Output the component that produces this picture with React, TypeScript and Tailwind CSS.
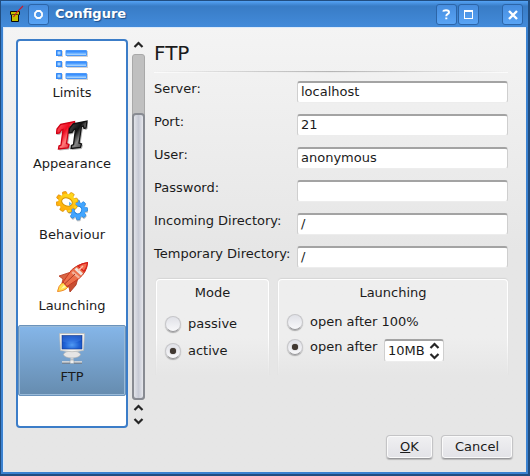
import React from "react";

function LimitsIcon() {
  return (
    <svg width="32" height="32" viewBox="0 0 32 32">
      <defs>
        <linearGradient id="bar" x1="0" y1="0" x2="0" y2="1">
          <stop offset="0" stopColor="#2f86fb" />
          <stop offset="0.35" stopColor="#4c9dff" />
          <stop offset="1" stopColor="#b4dcff" />
        </linearGradient>
      </defs>
      {[1, 12, 24].map((y) => (
        <g key={y}>
          <rect x="2" y={y + 1} width="5" height="6" fill="#d2d2d2" />
          <rect x="11" y={y + 1} width="21" height="6" fill="#d2d2d2" />
          <rect x="0" y={y} width="6" height="6" rx="0.5" fill="#338af8" />
          <rect x="1.5" y={y + 1.5} width="3" height="3" fill="#a4d1ff" />
          <rect x="9.5" y={y} width="21.5" height="6" rx="1" fill="#4b98f8" />
          <rect x="10.5" y={y + 1} width="19.5" height="4" fill="url(#bar)" />
        </g>
      ))}
    </svg>
  );
}

function AppearanceIcon() {
  const t = "M4.5 3.5 L18.5 0.5 L17.5 7.5 L15.5 8 L15 5.5 L13 6 L10.5 22.5 L13 23.5 L12 27 L2.500 28 L3 25 L5 24 L7 8.500 L5.500 9 L3.500 12 L0.500 12.500 L1 8 Z";
  return (
    <svg width="32" height="32" viewBox="0 0 32 32">
      <defs>
        <linearGradient id="red" x1="0" y1="0" x2="1" y2="1">
          <stop offset="0" stopColor="#ff6a70" />
          <stop offset="0.4" stopColor="#f00a20" />
          <stop offset="0.6" stopColor="#ff7a7a" />
          <stop offset="1" stopColor="#c90015" />
        </linearGradient>
        <linearGradient id="blk" x1="0" y1="0" x2="1" y2="1">
          <stop offset="0" stopColor="#555" />
          <stop offset="0.4" stopColor="#111" />
          <stop offset="0.6" stopColor="#888" />
          <stop offset="1" stopColor="#181818" />
        </linearGradient>
      </defs>
      <path d={t} transform="translate(1 2)" fill="#b8b8b8" stroke="#b8b8b8" />
      <path d={t} transform="translate(0 1)" fill="url(#red)" stroke="#cf0014" strokeWidth="1.3" />
      <path d={t} transform="translate(13.500 1.500)" fill="#b8b8b8" stroke="#b8b8b8" />
      <path d={t} transform="translate(12.500 0.500)" fill="url(#blk)" stroke="#111" strokeWidth="1.300" />
    </svg>
  );
}

function Gear({ fill, stroke }: { fill: string; stroke: string }) {
  return (
    <g fill={fill} stroke={stroke} strokeWidth="0.7">
      {[0, 45, 90, 135].map((a) => (
        <rect key={a} x="-2.1" y="-11" width="4.2" height="22" rx="1" transform={`rotate(${a + 12})`} />
      ))}
      <circle r="8.6" strokeWidth="0" />
    </g>
  );
}

function BehaviourIcon() {
  return (
    <svg width="32" height="32" viewBox="0 0 32 32">
      <defs>
        <linearGradient id="gold" x1="0" y1="0" x2="0" y2="1">
          <stop offset="0" stopColor="#ffd91c" />
          <stop offset="1" stopColor="#ffad0b" />
        </linearGradient>
      </defs>
      <g transform="translate(22 19) rotate(30) scale(.87 .9)">
        <g transform="translate(1 1)"><Gear fill="#c4c4c4" stroke="#c4c4c4" /></g>
        <Gear fill="#42a5ff" stroke="#187bd5" />
        <circle r="4.2" fill="#fff" stroke="#187bd5" />
      </g>
      <g transform="translate(11 11) rotate(20) scale(1.020 .94)">
        <Gear fill="url(#gold)" stroke="#d98a00" />
        <ellipse rx="5.400" ry="4.200" fill="#fff" stroke="#d49300" />
        <path d="M2 -1 L5 0 L3 3Z" fill="#58b4ef" />
      </g>
    </svg>
  );
}

function LaunchingIcon() {
  return (
    <svg width="32" height="32" viewBox="0 0 32 32">
      <path d="M1.500 29.500 Q2 24 7 20 L12 25 Q9 29 1.500 29.500Z" fill="#ffdf4d" stroke="#f18a2a" />
      <path d="M5 27 L8 23 L10 25Z" fill="#fff6b0" />
      <path d="M15 10 L3 14 L7 17 L6 21 L14 19Z" fill="#d96542" stroke="#b7391f" strokeWidth=".8" />
      <path d="M22 16 L20 23 L14 30 L13 25 L10 24 L14 18Z" fill="#c84f32" stroke="#a93119" strokeWidth=".8" />
      <path d="M31.5 .700 Q22 2 15.500 8 L7 20 L11 24.500 L23 16.500 Q31 10 31.500 .700Z" fill="#ed704b" stroke="#c93921" strokeWidth="1" />
      <path d="M31.500 .700 Q26 1.500 22 4 L28 9.500 Q31 6 31.500 .700Z" fill="#f46a4c" stroke="#d7201b" strokeWidth="1.200" />
      <path d="M20.500 5.500 L27 11.500 L25 13.500 L18.500 7.500Z" fill="#eee5df" />
      <path d="M17 9 L24 15 L22.500 16.500 L15.500 11Z" fill="#f2b39b" />
      <path d="M8.500 22 L19 12" stroke="#a93c26" />
      <path d="M27 4 L22 9" stroke="#ffc1ae" strokeWidth="1.500" />
    </svg>
  );
}

function FtpIcon() {
  return (
    <svg width="32" height="32" viewBox="0 0 32 32">
      <defs>
        <radialGradient id="screen" cx=".5" cy=".7" r=".75">
          <stop offset="0" stopColor="#529cf5" />
          <stop offset=".5" stopColor="#1f61d4" />
          <stop offset="1" stopColor="#0d3fae" />
        </radialGradient>
      </defs>
      <ellipse cx="16" cy="21.500" rx="8.500" ry="3.500" fill="#e5e5e5" stroke="#aaa" strokeWidth=".6" />
      <rect x="14.500" y="24.500" width="3" height="4" fill="#c9ced3" />
      <path d="M6 29.500H14M18 29.500H26" stroke="#747e88" strokeWidth="2.400" />
      <path d="M6 28.800H14M18 28.800H26" stroke="#e9ecee" strokeWidth="1.300" />
      <rect x="14" y="27" width="4" height="3.500" rx="1" fill="#eee" stroke="#8b949b" strokeWidth=".5" />
      <path d="M3.500 .500H28.500L27.500 17.500Q16 20 4.500 17.500Z" fill="#f4f3ef" stroke="#b8b8b4" strokeWidth=".7" />
      <rect x="6" y="2.500" width="20" height="13.500" fill="url(#screen)" stroke="#143f93" strokeWidth=".6" />
      <path d="M6.500 3H25.500V7Q17 12.500 6.500 8.500Z" fill="#4b8cf0" opacity=".35" />
    </svg>
  );
}

const pages = [
  { name: "Limits", Icon: LimitsIcon },
  { name: "Appearance", Icon: AppearanceIcon },
  { name: "Behaviour", Icon: BehaviourIcon },
  { name: "Launching", Icon: LaunchingIcon },
  { name: "FTP", Icon: FtpIcon, selected: true },
];

function Chevron({ down = false }: { down?: boolean }) {
  return (
    <svg width="11" height="8" viewBox="0 0 11 8" className={down ? "rotate-180" : ""}>
      <path d="M1.500 6 L5.500 2 L9.500 6" fill="none" stroke="#262626" strokeWidth="2.200" />
    </svg>
  );
}

function TitleButton({ children }: { children: React.ReactNode }) {
  return (
    <div className="flex h-[21px] w-[21px] shrink-0 items-center justify-center rounded-[3px] border border-[#2c65a8] bg-linear-to-b from-[#468ddf] to-[#59a4f5]">
      {children}
    </div>
  );
}

function TitleBar() {
  return (
    <div className="flex h-[26px] shrink-0 items-start bg-linear-to-b from-[#55a3f5] via-[#387cc6] via-20% to-[#438bda] pt-[3px] pr-[5px] pl-[8px]">
      <svg width="17" height="20" viewBox="0 0 17 20" className="mr-[2px]">
        <path d="M1.500 7.500H10.500V10.500H9.500V17.500H2.500V10.500H1.500Z" fill="#c6c000" stroke="#080808" strokeWidth="1" />
        <path d="M2 10.500H10" stroke="#55520a" />
        <path d="M4.500 13L8 8L14 2" fill="none" stroke="#d51625" strokeWidth="1.100" />
      </svg>
      <TitleButton>
        <svg width="9" height="9" viewBox="0 0 9 9"><path d="M3 1H6L8 3V6L6 8H3L1 6V3Z" fill="none" stroke="#fff" strokeWidth="1.800" /></svg>
      </TitleButton>
      <span className="ml-[6px] flex-1 text-[13px] leading-[19px] font-bold text-white [text-shadow:1px_1px_1px_#1f4f8a]">Configure</span>
      <div className="flex gap-[1px]">
        <TitleButton>
          <svg width="9" height="11" viewBox="0 0 9 11"><path d="M1 2.500Q1.500 1.200 4 1.200Q7 1.200 7 3.200Q7 4.500 5.500 5.200Q4.300 5.800 4.300 7.200M4.300 8.500V10.200" fill="none" stroke="#fff" strokeWidth="2" /></svg>
        </TitleButton>
        <TitleButton>
          <svg width="9" height="9" viewBox="0 0 9 9"><path d="M.5 0V9M8.500 0V9M0 8.500H9" stroke="#fff" /><path d="M0 1H9" stroke="#fff" strokeWidth="2" /></svg>
        </TitleButton>
        <div className="ml-[22px]">
          <TitleButton>
            <svg width="10" height="10" viewBox="0 0 10 10"><path d="M1 1L9 9M9 1L1 9" stroke="#fff" strokeWidth="2.400" /></svg>
          </TitleButton>
        </div>
      </div>
    </div>
  );
}

function Field({ label, value }: { label: string; value: string }) {
  return (
    <div className="flex h-[33px] items-start">
      <span className="w-[143px] shrink-0 leading-[16px] whitespace-nowrap">{label}</span>
      <div className="h-[22px] w-[211px] rounded-[3px] border border-t-2 border-[#cfcfcf] border-t-[#a3a3a3] border-b-[#ededed] bg-white pl-[3px] leading-[17px]">{value}</div>
    </div>
  );
}

function Radio({ checked = false }: { checked?: boolean }) {
  return (
    <div className="flex h-[16px] w-[16px] shrink-0 items-center justify-center rounded-full border border-[#c6c6c9] border-b-[#98989b] bg-linear-to-b from-[#e0e1e7] to-[#f8f8fa] shadow-[0_1px_1px_#aaa]">
      {checked && <div className="h-[6px] w-[6px] rounded-full bg-[#403831] shadow-[0_0_1px_#403831]" />}
    </div>
  );
}

function Group({ title, className, children }: { title: string; className: string; children: React.ReactNode }) {
  return (
    <div className={`h-[97px] rounded-t-[4px] bg-linear-to-b from-white from-60% to-[#e6e6e6] px-[1px] pt-[1px] shadow-[0_-1px_1px_#d5d5d5] ${className}`}>
      <div className="h-[96px] rounded-t-[3px] bg-linear-to-b from-[#eeeeee] from-60% to-[#e6e6e6] pt-[5px]">
        <div className="text-center leading-[16px]">{title}</div>
        {children}
      </div>
    </div>
  );
}

function PushButton({ className, children }: { className: string; children: React.ReactNode }) {
  return (
    <div className={`flex h-[24px] items-center justify-center rounded-[4px] border border-[#c4c4c6] border-b-[#98989b] bg-linear-to-b from-[#f0f0f2] to-[#e2e2e7] shadow-[inset_0_0_0_1px_#fafafa,0_1px_1px_#b8b8b8] ${className}`}>{children}</div>
  );
}

export default function App() {
  return (
    <div className="flex h-[476px] w-[530px] flex-col overflow-hidden border-t border-r-2 border-b-2 border-l border-[#214d80] bg-[#3b82d0] font-['DejaVu_Sans',sans-serif] text-[13px] text-[#1b1b1b]">
      <TitleBar />
      <div className="mr-[2px] mb-[2px] ml-[2px] flex min-h-0 flex-1 flex-col border-t border-l border-[#dceafa] bg-linear-to-b from-[#f4f4f4] to-[#e6e6e6] to-50%">
        <div className="mt-[11px] flex h-[389px] shrink-0 pl-[12px]">
          <div className="h-[389px] w-[112px] shrink-0 rounded-[4px] border-2 border-[#3c7dc8] bg-white">
            {pages.map(({ name, Icon, selected }) => (
              <div key={name} className={`flex h-[71px] flex-col items-center rounded-[2px] ${selected ? "border border-[#6b93bb] bg-linear-to-b from-[#85b6e9] to-[#668caf] pt-[7px] shadow-[inset_0_0_0_1px_#99bad9]" : "pt-[8px]"}`}>
                <Icon />
                <span className="mt-[4px] leading-[16px]">{name}</span>
              </div>
            ))}
          </div>
          <div className="ml-[4px] flex w-[13px] shrink-0 flex-col items-center pt-[2px]">
            <Chevron />
            <div className="mt-[5px] h-[346px] w-[13px] rounded-[3px] border border-[#a9a9a9] bg-[#c0c0c0] pt-[58px]">
              <div className="-ml-[1px] h-[287px] w-[13px] rounded-[4px] border-2 border-[#888b92] bg-linear-to-r from-[#e1e3e9] via-[#c7cad5] to-[#e6e7ec]" />
            </div>
            <div className="mt-[4px] flex flex-col gap-[5px]"><Chevron /><Chevron down /></div>
          </div>
          <div className="ml-[9px] w-[360px]">
            <h1 className="h-[32px] pt-[2px] text-[20px] leading-[25px]">FTP</h1>
            <div className="h-[2px] w-[354px] border-b border-white/70 bg-linear-to-r from-transparent via-[#b5b5b5] to-transparent" />
            <div className="pt-[8px]">
              <Field label="Server:" value="localhost" />
              <Field label="Port:" value="21" />
              <Field label="User:" value="anonymous" />
              <Field label="Password:" value="" />
              <Field label="Incoming Directory:" value="/" />
              <Field label="Temporary Directory:" value="/" />
            </div>
            <div className="flex gap-[9px] pl-[2px]">
              <Group title="Mode" className="w-[113px]">
                <div className="mt-[15px] flex flex-col gap-[11px] pl-[8px]">
                  <div className="flex h-[16px] items-center gap-[7px]"><Radio />passive</div>
                  <div className="flex h-[16px] items-center gap-[7px]"><Radio checked />active</div>
                </div>
              </Group>
              <Group title="Launching" className="w-[230px]">
                <div className="mt-[13px] pl-[8px]">
                  <div className="flex h-[16px] items-center gap-[7px]"><Radio />open after 100%</div>
                  <div className="mt-[9px] flex items-start gap-[7px]">
                    <Radio checked />
                    <span className="w-[67px] shrink-0 leading-[16px] whitespace-nowrap">open after</span>
                    <div className="flex h-[23px] w-[60px] shrink-0 items-center justify-between rounded-[3px] border border-t-2 border-[#cfcfcf] border-t-[#a3a3a3] border-b-[#ededed] bg-white pr-[3px] pl-[3px]">
                      10MB
                      <div className="flex flex-col gap-[2px]"><Chevron /><Chevron down /></div>
                    </div>
                  </div>
                </div>
              </Group>
            </div>
          </div>
        </div>
        <div className="mt-[7px] flex justify-end gap-[8px] pr-[13px]">
          <PushButton className="w-[47px]"><span className="underline">O</span>K</PushButton>
          <PushButton className="w-[72px]">Cancel</PushButton>
        </div>
      </div>
    </div>
  );
}
